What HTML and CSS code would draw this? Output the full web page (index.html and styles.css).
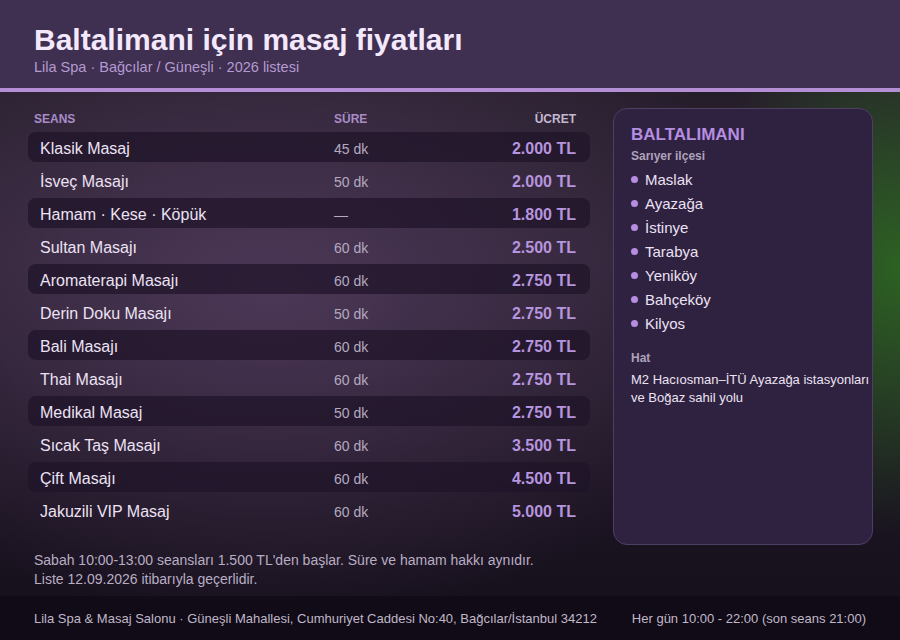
FILE: index.html
```html
<!DOCTYPE html>
<html lang="tr">
<head>
<meta charset="utf-8">
<title>Baltalimani için masaj fiyatları</title>
<link rel="stylesheet" href="styles.css">
</head>
<body>
<div class="page">
  <header class="top">
    <h1 class="title">Baltalimani için masaj fiyatları</h1>
    <p class="subtitle">Lila Spa · Bağcılar / Güneşli · 2026 listesi</p>
  </header>
  <main class="main">
    <section class="prices">
      <div class="head">
        <span class="c-name">SEANS</span>
        <span class="c-dur">SÜRE</span>
        <span class="c-price">ÜCRET</span>
      </div>
      <div class="row alt"><span class="c-name">Klasik Masaj</span><span class="c-dur">45 dk</span><span class="c-price">2.000 TL</span></div>
      <div class="row"><span class="c-name">İsveç Masajı</span><span class="c-dur">50 dk</span><span class="c-price">2.000 TL</span></div>
      <div class="row alt"><span class="c-name">Hamam · Kese · Köpük</span><span class="c-dur">—</span><span class="c-price">1.800 TL</span></div>
      <div class="row"><span class="c-name">Sultan Masajı</span><span class="c-dur">60 dk</span><span class="c-price">2.500 TL</span></div>
      <div class="row alt"><span class="c-name">Aromaterapi Masajı</span><span class="c-dur">60 dk</span><span class="c-price">2.750 TL</span></div>
      <div class="row"><span class="c-name">Derin Doku Masajı</span><span class="c-dur">50 dk</span><span class="c-price">2.750 TL</span></div>
      <div class="row alt"><span class="c-name">Bali Masajı</span><span class="c-dur">60 dk</span><span class="c-price">2.750 TL</span></div>
      <div class="row"><span class="c-name">Thai Masajı</span><span class="c-dur">60 dk</span><span class="c-price">2.750 TL</span></div>
      <div class="row alt"><span class="c-name">Medikal Masaj</span><span class="c-dur">50 dk</span><span class="c-price">2.750 TL</span></div>
      <div class="row"><span class="c-name">Sıcak Taş Masajı</span><span class="c-dur">60 dk</span><span class="c-price">3.500 TL</span></div>
      <div class="row alt"><span class="c-name">Çift Masajı</span><span class="c-dur">60 dk</span><span class="c-price">4.500 TL</span></div>
      <div class="row"><span class="c-name">Jakuzili VIP Masaj</span><span class="c-dur">60 dk</span><span class="c-price">5.000 TL</span></div>
    </section>
    <aside class="card">
      <h2 class="card-title">BALTALIMANI</h2>
      <p class="card-sub">Sarıyer ilçesi</p>
      <ul class="places">
        <li>Maslak</li>
        <li>Ayazağa</li>
        <li>İstinye</li>
        <li>Tarabya</li>
        <li>Yeniköy</li>
        <li>Bahçeköy</li>
        <li>Kilyos</li>
      </ul>
      <p class="card-sub hat">Hat</p>
      <p class="line">M2 Hacıosman–İTÜ Ayazağa istasyonları ve Boğaz sahil yolu</p>
    </aside>
  </main>
  <div class="notes">
    <p>Sabah 10:00-13:00 seansları 1.500 TL'den başlar. Süre ve hamam hakkı aynıdır.</p>
    <p>Liste 12.09.2026 itibarıyla geçerlidir.</p>
  </div>
  <footer class="foot">
    <span>Lila Spa &amp; Masaj Salonu · Güneşli Mahallesi, Cumhuriyet Caddesi No:40, Bağcılar/İstanbul 34212</span>
    <span>Her gün 10:00 - 22:00 (son seans 21:00)</span>
  </footer>
</div>
</body>
</html>
```

FILE: styles.css
```css
* { box-sizing: border-box; }
html, body { margin: 0; padding: 0; }
body {
  width: 900px;
  height: 640px;
  overflow: hidden;
  font-family: Arial, "Liberation Sans", Helvetica, sans-serif;
  background:
    radial-gradient(ellipse 210px 270px at 100% 42%, rgba(45, 120, 30, 0.75), rgba(45, 120, 30, 0) 100%),
    radial-gradient(ellipse 520px 330px at 30% 45%, rgba(82, 60, 94, 0.85), rgba(82, 60, 94, 0) 100%),
    linear-gradient(180deg, #241c28 0%, #2a2030 40%, #1c1422 75%, #150f1b 100%);
}
.page {
  width: 900px;
  height: 640px;
  display: flex;
  flex-direction: column;
}
.top {
  height: 92px;
  background: #3f2f50;
  border-bottom: 4px solid #b48fd6;
  padding: 23px 34px 0;
}
.title {
  margin: 0;
  font-size: 30px;
  line-height: 34px;
  font-weight: bold;
  color: #f4e8fc;
}
.subtitle {
  margin: 1px 0 0;
  font-size: 14.5px;
  line-height: 18px;
  color: #b49bd0;
}
.main {
  display: flex;
  gap: 23px;
  padding: 16px 27px 0 28px;
  height: 453px;
}
.prices {
  width: 562px;
  display: flex;
  flex-direction: column;
  gap: 3px;
}
.head, .row {
  display: flex;
  align-items: center;
  padding: 0 14px 0 12px;
}
.head {
  height: 21px;
  padding-left: 6px;
  font-size: 12px;
  font-weight: bold;
  color: #a88cc8;
}
.head .c-price { color: #c4b8d0; }
.row {
  height: 30px;
  padding-top: 3px;
  border-radius: 8px;
  font-size: 16px;
  color: #ece2f4;
}
.row.alt { background: rgba(30, 20, 40, 0.72); }
.c-name { width: 294px; }
.head .c-name { width: 300px; }
.c-dur {
  width: 120px;
  font-size: 14px;
  color: #b4aac0;
}
.head .c-dur { font-size: 12px; color: #a88cc8; }
.c-price {
  flex: 1;
  text-align: right;
  font-weight: bold;
  color: #b794de;
}
.head .c-price { font-size: 12px; }
.card {
  width: 260px;
  height: 437px;
  background: #2f2140;
  border: 1px solid #4e3e64;
  border-radius: 14px;
  padding: 15px 0 0 17px;
}
.card-title {
  margin: 0;
  font-size: 17px;
  line-height: 22px;
  font-weight: bold;
  color: #b48ee0;
}
.card-sub {
  margin: 2px 0 0;
  font-size: 12px;
  line-height: 16px;
  font-weight: bold;
  color: #aea2bb;
}
.places {
  list-style: none;
  margin: 3px 0 0;
  padding: 0;
}
.places li {
  display: flex;
  align-items: center;
  height: 24px;
  font-size: 15px;
  color: #ece2f4;
}
.places li::before {
  content: "";
  width: 7px;
  height: 7px;
  border-radius: 50%;
  background: #b48ee0;
  margin: 1px 7px 0 0;
}
.card-sub.hat { margin-top: 15px; }
.line {
  margin: 5px 0 0;
  font-size: 13px;
  line-height: 18px;
  color: #ece4f2;
  width: 245px;
}
.notes {
  padding: 6px 34px 0;
  height: 51px;
}
.notes p {
  margin: 0;
  font-size: 14px;
  line-height: 19px;
  color: #b8aec4;
}
.foot {
  height: 44px;
  background: rgba(14, 9, 20, 0.6);
  display: flex;
  justify-content: space-between;
  align-items: center;
  padding: 0 34px;
  font-size: 13px;
  color: #c0b8c8;
}
```
